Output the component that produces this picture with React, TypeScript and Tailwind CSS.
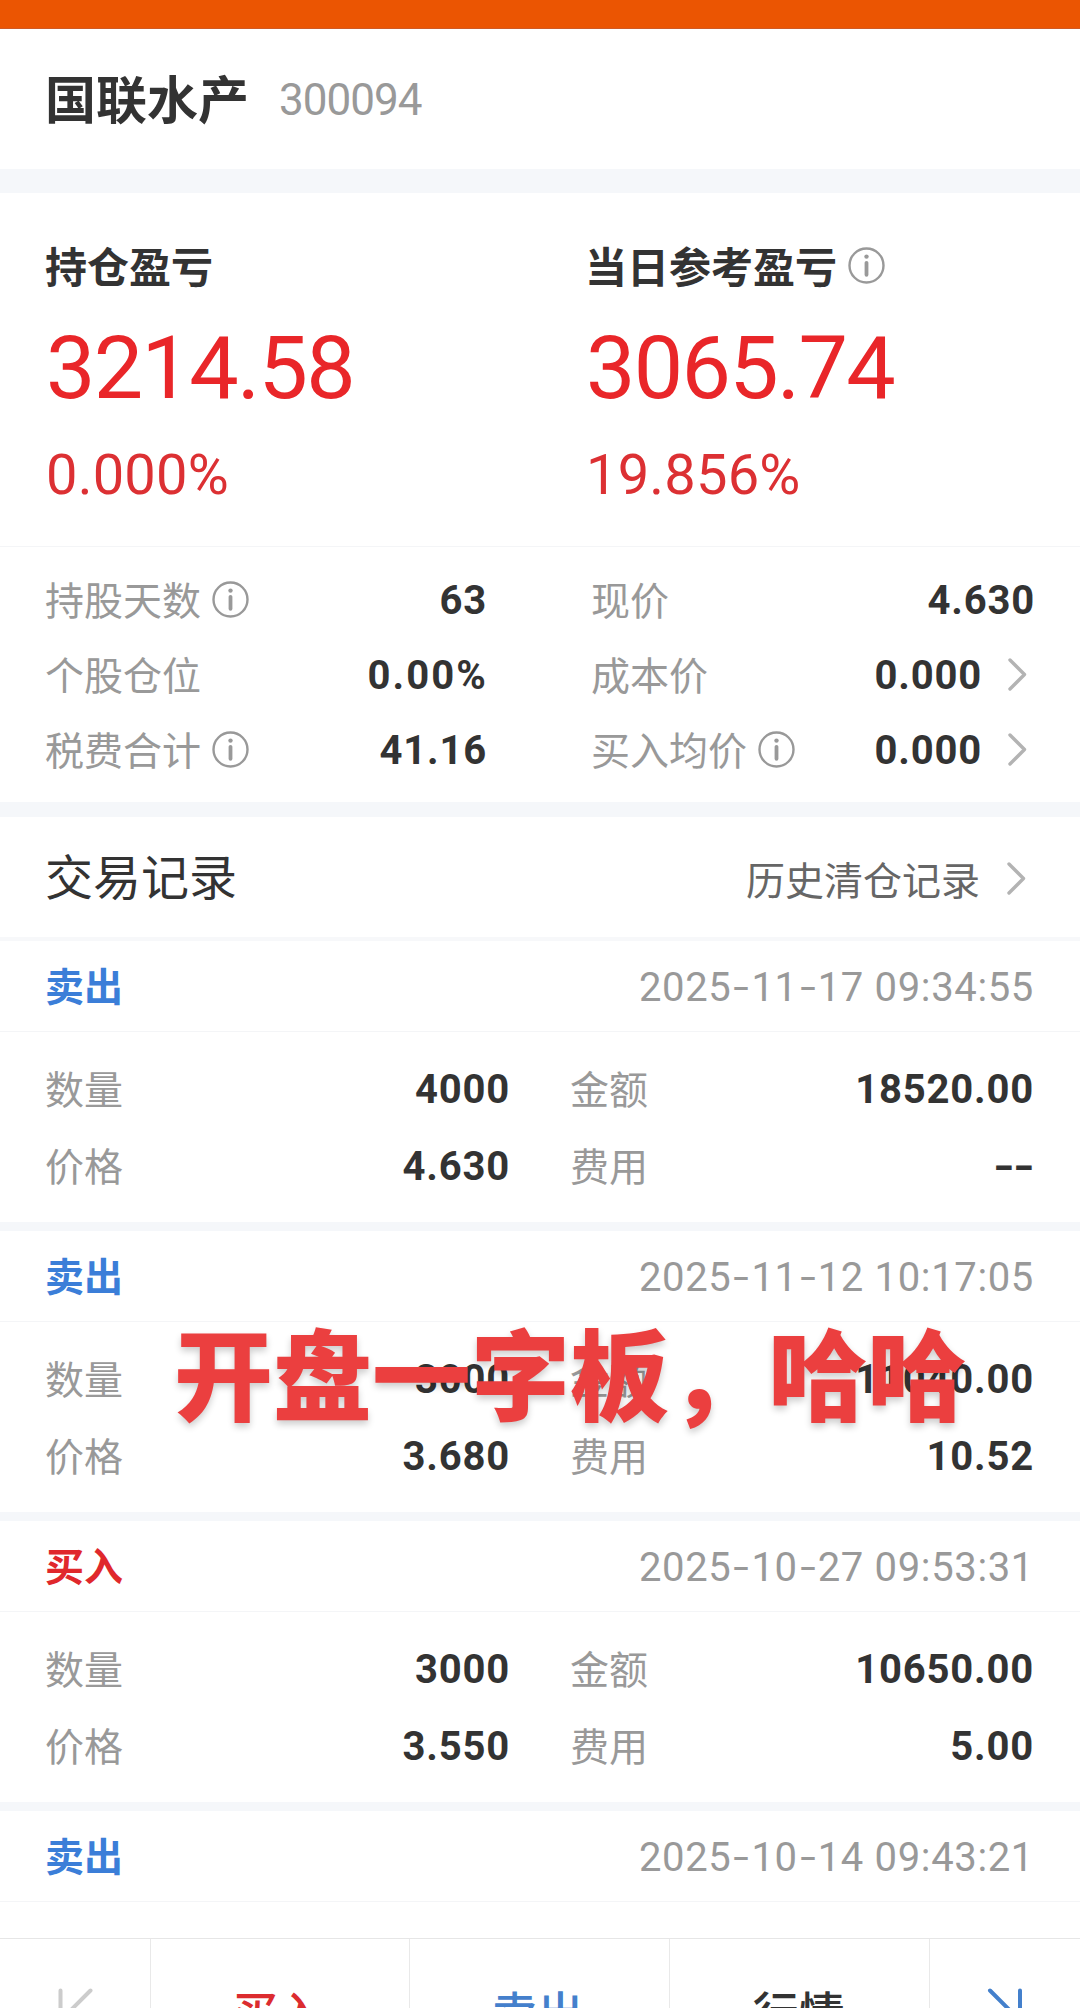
import clsx from "clsx";
import type { ReactNode } from "react";

type TradeRecord = {
  side: "buy" | "sell";
  time: string;
  quantity: string;
  amount: string;
  price: string;
  fee: string;
};

const records: TradeRecord[] = [
  { side: "sell", time: "2025-11-17 09:34:55", quantity: "4000", amount: "18520.00", price: "4.630", fee: "--" },
  { side: "sell", time: "2025-11-12 10:17:05", quantity: "3000", amount: "11040.00", price: "3.680", fee: "10.52" },
  { side: "buy", time: "2025-10-27 09:53:31", quantity: "3000", amount: "10650.00", price: "3.550", fee: "5.00" },
];

function InfoIcon() {
  return (
    <svg className="ml-[11px] size-[37px] shrink-0" viewBox="0 0 37 37" fill="none" stroke="#999999">
      <circle cx="18.5" cy="18.5" r="17" strokeWidth="2.4" />
      <circle cx="18.5" cy="9.6" r="2.2" fill="#999999" stroke="none" />
      <path d="M18.5 15.8v12" strokeWidth="3.8" strokeLinecap="round" />
    </svg>
  );
}

function ChevronIcon() {
  return (
    <svg className="ml-[26px] mr-2 h-[33px] w-[19px] shrink-0" viewBox="0 0 19 33" fill="none" stroke="#b3b3b3">
      <path d="M2 2l14.5 14.5L2 31" strokeWidth="3.4" strokeLinecap="round" strokeLinejoin="round" />
    </svg>
  );
}

// Roboto's hyphen is narrow, so it is stretched to sit in a figure-wide cell
function Figures({ children }: { children: string }) {
  return (
    <>
      {children.split(/(-)/).map((part, i) =>
        part === "-" ? (
          <span key={i} className="inline-block w-5 origin-center scale-x-[1.4] text-center tracking-normal">
            -
          </span>
        ) : (
          part
        ),
      )}
    </>
  );
}

function Value({ children }: { children: string }) {
  return (
    <span
      className={clsx(
        "pt-0.5 font-[Roboto,sans-serif] text-[40px] font-bold text-[#333333]",
        children.endsWith("%") ? "-mr-px tracking-[2.1px]" : "tracking-[0.8px]",
      )}
    >
      <Figures>{children}</Figures>
    </span>
  );
}

function Label({ children }: { children: ReactNode }) {
  return <span className="pb-0.5 text-[39px] text-[#999999]">{children}</span>;
}

function Summary({ title, info, value, percent }: { title: string; info?: boolean; value: string; percent: string }) {
  return (
    <div className="pl-[45px] pt-[47px]">
      <div className="flex h-[50px] items-center">
        <h2 className="text-[42px] font-bold leading-[50px] text-[#333333]">{title}</h2>
        {info && <InfoIcon />}
      </div>
      <p className="ml-px mt-[33px] font-[Roboto,sans-serif] text-[88px] leading-[90px] tracking-[-1.7px] text-[#e92629]">{value}</p>
      <p className="ml-px mt-8 font-[Roboto,sans-serif] text-[56px] leading-[60px] tracking-[0.2px] text-[#dc3033]">{percent}</p>
    </div>
  );
}

function Stat({ label, info, value, link }: { label: string; info?: boolean; value: string; link?: boolean }) {
  return (
    <div className="flex h-[75px] items-center">
      <Label>{label}</Label>
      {info && <InfoIcon />}
      <span className="ml-auto flex items-center">
        <Value>{value}</Value>
        {link && <ChevronIcon />}
      </span>
    </div>
  );
}

function RecordHeader({ side, time }: { side: TradeRecord["side"]; time: string }) {
  return (
    <div className="flex h-[91px] items-center justify-between border-b border-[#f4f5f7] pl-[45px] pr-[46px]">
      <span className={clsx("pb-[3px] text-[39px] font-bold", side === "sell" ? "text-[#3b7ed8]" : "text-[#e0282c]")}>
        {side === "sell" ? "卖出" : "买入"}
      </span>
      <span className="pt-[3px] font-[Roboto,sans-serif] text-[40px] tracking-[0.65px] text-[#999999]">
        <Figures>{time}</Figures>
      </span>
    </div>
  );
}

function RecordCell({ label, value }: { label: string; value: string }) {
  return (
    <div className="flex items-center justify-between">
      <Label>{label}</Label>
      <Value>{value}</Value>
    </div>
  );
}

function RecordCard({ record }: { record: TradeRecord }) {
  return (
    <article className="border-b-[9px] border-[#f5f7fa]">
      <RecordHeader side={record.side} time={record.time} />
      <div className="grid h-[190px] grid-cols-[465px_464px] grid-rows-[77px_77px] gap-x-[60px] pl-[45px] pt-[18px]">
        <RecordCell label="数量" value={record.quantity} />
        <RecordCell label="金额" value={record.amount} />
        <RecordCell label="价格" value={record.price} />
        <RecordCell label="费用" value={record.fee} />
      </div>
    </article>
  );
}

function BottomBar() {
  return (
    <nav className="flex h-[150px] border-t border-[#e6e6e6] bg-white text-[46px] font-medium">
      <div className="flex w-[151px] items-center justify-center border-r border-[#e9e9e9]">
        <svg className="h-[54px] w-[36px]" viewBox="0 0 36 54" fill="none" stroke="#cccccc" strokeWidth="4" strokeLinecap="round">
          <path d="M3.5 3.5v46M33.5 3.5l-23 23 23 23" />
        </svg>
      </div>
      <div className="flex w-[259px] items-center justify-center border-r border-[#e9e9e9] pb-[7px] pr-1 text-[#dc2c2f]">买入</div>
      <div className="flex w-[260px] items-center justify-center border-r border-[#e9e9e9] pb-[7px] pr-1 text-[#4480cc]">卖出</div>
      <div className="flex w-[260px] items-center justify-center border-r border-[#e9e9e9] pb-[7px] pr-0.5 text-[#333333]">行情</div>
      <div className="flex flex-1 items-center justify-center">
        <svg className="h-[54px] w-[36px]" viewBox="0 0 36 54" fill="none" stroke="#4480cc" strokeWidth="4" strokeLinecap="round">
          <path d="M33 3.5v46M3 3.5l23 23-23 23" />
        </svg>
      </div>
    </nav>
  );
}

export default function App() {
  return (
    <main className="relative h-[2008px] w-[1080px] overflow-hidden bg-white font-['Noto_Sans_CJK_SC',sans-serif]">
      <div className="h-[29px] border-b border-[#cf5a25] bg-[#eb5502]" />

      <header className="flex h-[140px] items-center pl-[45px]">
        <h1 className="pb-[3px] text-[51px] font-bold leading-none text-[#333333]">国联水产</h1>
        <span className="ml-[30px] pt-px font-[Roboto,sans-serif] text-[44px] leading-none tracking-[-1px] text-[#999999]">300094</span>
      </header>

      <section className="grid h-[378px] grid-cols-2 border-b border-t-[24px] border-b-[#f4f5f7] border-t-[#f5f7fa]">
        <Summary title="持仓盈亏" value="3214.58" percent="0.000%" />
        <Summary title="当日参考盈亏" info value="3065.74" percent="19.856%" />
      </section>

      <section className="flex h-[270px] border-b-[15px] border-[#f5f7fa] pl-[45px] pt-[15px]">
        <div className="w-[442px]">
          <Stat label="持股天数" info value="63" />
          <Stat label="个股仓位" value="0.00%" />
          <Stat label="税费合计" info value="41.16" />
        </div>
        <div className="ml-[104px] w-[444px]">
          <Stat label="现价" value="4.630" />
          <Stat label="成本价" value="0.000" link />
          <Stat label="买入均价" info value="0.000" link />
        </div>
      </section>

      <div className="flex h-[124px] items-center justify-between border-b-4 border-[#f7f8fa] pl-[45px] pr-[46px]">
        <h2 className="pb-[7px] text-5xl text-[#333333]">交易记录</h2>
        <a className="flex items-center pt-[3px] text-[39px] text-[#666666]">
          <span className="-mr-px pr-0.5">历史清仓记录</span>
          <ChevronIcon />
        </a>
      </div>

      {records.map((record) => (
        <RecordCard key={record.time} record={record} />
      ))}

      <RecordHeader side="sell" time="2025-10-14 09:43:21" />
      <div className="h-9" />
      <BottomBar />

      <p className="absolute left-[174px] top-[1315px] whitespace-nowrap text-[99px] font-black leading-[110px] text-[#eb3f3f] [text-shadow:0_4px_7px_rgba(0,0,0,0.2)]">
        开盘一字板，哈哈
      </p>
    </main>
  );
}
